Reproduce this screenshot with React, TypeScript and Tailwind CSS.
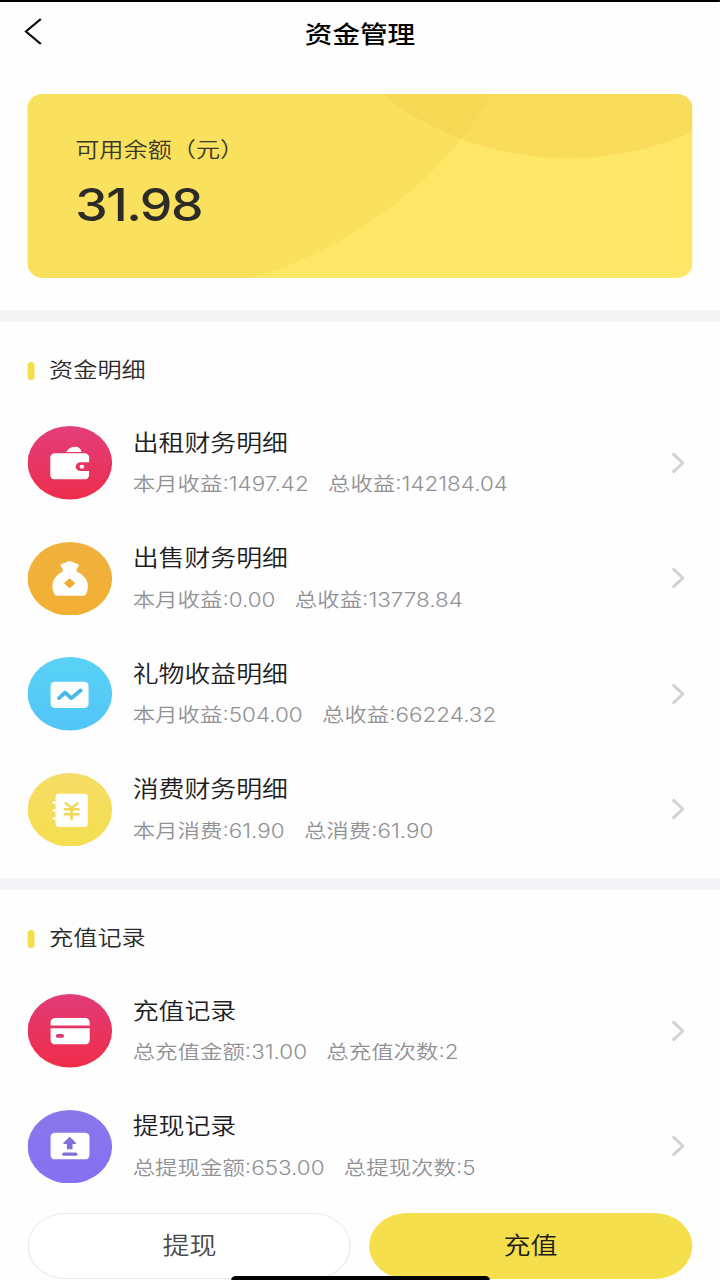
import type { ReactNode } from "react";

type Row = { title: string; parts: [string, string]; icon: ReactNode };

function Disc({ id, from, to, children }: { id: string; from: string; to: string; children: ReactNode }) {
  return (
    <svg className="h-[73.5px] w-[73.5px] shrink-0" viewBox="0 0 73.5 73.5" fill="none">
      <defs>
        <linearGradient id={id} x1="0" y1="0" x2="0" y2="1">
          <stop offset="0" stopColor={from} />
          <stop offset="1" stopColor={to} />
        </linearGradient>
      </defs>
      <circle cx="36.75" cy="36.75" r="36.75" fill={`url(#${id})`} />
      {children}
    </svg>
  );
}

const WalletIcon = (
  <Disc id="wallet" from="#e23e7c" to="#ee2d4c">
    <path d="M33.6 26c1.500-3.400 4.700-5.300 8-5.300 2.800 0 4.800 2 5.300 5.300z" fill="#fff" />
    <path
      d="M23.700 27.300h25.800a4 4 0 0 1 4 4v5h-7.300a4.400 4.400 0 0 0 0 8.800h7.300v4.200a4 4 0 0 1-4 4H23.700a4 4 0 0 1-4-4v-18a4 4 0 0 1 4-4z"
      fill="#fff"
    />
    <circle cx="47.200" cy="40.700" r="2" fill="#fff" />
  </Disc>
);

const BagIcon = (
  <Disc id="bag" from="#f0b13e" to="#f2b033">
    <path
      d="M30.500 21.500c1.500-.3 2-.5 3-1.300 1.400-1.200 4.600-1.200 6 0 1 .8 1.500 1 3 1.300 2 .3 2.500 2 1.500 3.300-1.400 1.600-1.800 3.200-1.100 5 5.800 2.900 9.500 8.200 9.500 14 0 3.200-.5 6.400-2 8.700-.6.900-1.300 1.300-2.200 1.300H25.800c-.9 0-1.600-.4-2.200-1.300-1.500-2.300-2-5.500-2-8.700 0-5.800 3.500-11.100 8.700-14 .7-1.800.3-3.400-1.100-5-1-1.300-.7-3 1.300-3.300z"
      fill="#fff"
    />
    <path d="M36.500 37.200l4 4-4 4-4-4z" fill="#efad38" stroke="#efad38" strokeWidth="1.500" strokeLinejoin="round" />
  </Disc>
);

const TrendIcon = (
  <Disc id="trend" from="#59d2f4" to="#52c5f8">
    <rect x="20" y="24.700" width="33" height="26.300" rx="4" fill="#fff" />
    <path d="M27.400 41.100l5.200-5.600 5.400 5.700 8.100-7.800" stroke="#4bb9e4" strokeWidth="3.600" strokeLinecap="round" strokeLinejoin="round" />
  </Disc>
);

const LedgerIcon = (
  <Disc id="ledger" from="#f5dc65" to="#f5df50">
    <rect x="24.300" y="20.700" width="28" height="33.300" rx="3" fill="#fff" />
    <path d="M22.500 29.700h3M22.500 37.500h3M22.500 45.300h3" stroke="#fff" strokeWidth="2.200" strokeLinecap="round" />
    <path d="M33.300 30.300l5 4.700 5-4.700M32.300 36.200h12M32.300 41.300h12M38.300 35.300v11" stroke="#f0d95a" strokeWidth="2.400" strokeLinecap="round" />
  </Disc>
);

const CardIcon = (
  <Disc id="card" from="#e03b78" to="#f02d49">
    <path d="M24 24h26a4 4 0 0 1 4 4v3.600H20V28a4 4 0 0 1 4-4zM20 34.200h34v12.100a4 4 0 0 1-4 4H24a4 4 0 0 1-4-4z" fill="#fff" />
    <rect x="24.500" y="40" width="7.200" height="3.800" rx="1.900" fill="#d83a67" />
  </Disc>
);

const UploadIcon = (
  <Disc id="upload" from="#8a77ea" to="#8570f3">
    <rect x="20" y="22.700" width="33.800" height="26.600" rx="4" fill="#fff" />
    <path d="M36.600 27.800l4.900 5.400h-3.100v5.400h-3.600v-5.400h-3.100z" fill="#8170d8" stroke="#8170d8" strokeWidth="1.400" strokeLinejoin="round" />
    <rect x="30" y="42.600" width="13.400" height="3.200" rx="1.600" fill="#8170d8" />
  </Disc>
);

const details: Row[] = [
  { title: "出租财务明细", parts: ["本月收益:1497.42", "总收益:142184.04"], icon: WalletIcon },
  { title: "出售财务明细", parts: ["本月收益:0.00", "总收益:13778.84"], icon: BagIcon },
  { title: "礼物收益明细", parts: ["本月收益:504.00", "总收益:66224.32"], icon: TrendIcon },
  { title: "消费财务明细", parts: ["本月消费:61.90", "总消费:61.90"], icon: LedgerIcon },
];

const records: Row[] = [
  { title: "充值记录", parts: ["总充值金额:31.00", "总充值次数:2"], icon: CardIcon },
  { title: "提现记录", parts: ["总提现金额:653.00", "总提现次数:5"], icon: UploadIcon },
];

function RecordRow({ title, parts, icon }: Row) {
  return (
    <li className="flex h-[115.5px] items-center pr-[7px]">
      {icon}
      <div className="ml-[17.5px] flex grow flex-col gap-[11.500px] pt-[1px] whitespace-nowrap">
        <div className="text-[22.5px] leading-[30px] font-[350] text-[#1d1d1f]">{title}</div>
        <div className="flex gap-[16.800px] text-[19.5px] leading-[30px] font-[350] text-[#929196]">
          <span>{parts[0]}</span>
          <span>{parts[1]}</span>
        </div>
      </div>
      <svg className="h-[22px] w-[11px] shrink-0" viewBox="0 0 11 22" fill="none">
        <path d="M1 1.500l8.800 9.500L1 20.500" stroke="#d2d2d5" strokeWidth="2.700" />
      </svg>
    </li>
  );
}

function Section({ title, rows }: { title: string; rows: Row[] }) {
  return (
    <section className="px-[24.4px] pt-[32px]">
      <h2 className="flex h-[32px] items-center gap-[12.300px] text-[21px] leading-[32px] font-[350] text-[#2a2a2c]">
        <span className="mt-[2px] h-[18px] w-[6px] rounded-[3px] bg-[#f5df46]" />
        {title}
      </h2>
      <ul className="mt-[19px]">
        {rows.map((row) => (
          <RecordRow key={row.title} {...row} />
        ))}
      </ul>
    </section>
  );
}

export default function App() {
  return (
    <div className="h-[1280px] w-[720px] overflow-hidden bg-white">
      <div className="relative flex h-[1280px] w-[626.1px] origin-top-left scale-x-[1.15] flex-col bg-[#fefefe] font-['Inter','Noto_Sans_CJK_SC',sans-serif]">
        <div className="h-[2px] shrink-0 bg-black" />
        <header className="grid h-[91.500px] shrink-0 grid-cols-[1fr_auto_1fr] items-start px-[21px]">
          <svg className="mt-[16px] h-[27px] w-[16px]" viewBox="0 0 16 27" fill="none">
            <path d="M14.500 1L1.500 13.500l13 12.500" stroke="#111" strokeWidth="2" />
          </svg>
          <h1 className="mt-[17px] text-[24px] leading-[32px] font-medium text-black">资金管理</h1>
        </header>

        <div className="relative mx-[24.400px] h-[184.500px] shrink-0 overflow-hidden rounded-[14px] bg-[#fee766]">
          <svg className="absolute inset-0 h-full w-full" viewBox="0 0 577.300 184.500" preserveAspectRatio="none">
            <circle cx="70" cy="-167" r="373" fill="#fae15d" />
            <circle cx="470" cy="-173" r="237" fill="#f4cf4c" fillOpacity="0.45" />
          </svg>
          <div className="relative px-[41px] pt-[40px]">
            <div className="text-[21px] leading-[32px] font-[350] text-[#3a3628]">可用余额（元）</div>
            <div className="mt-[14px] text-[45px] leading-[50px] font-[550] tracking-[-1.300px] text-[#2c2b26]">31.98</div>
          </div>
        </div>

        <div className="mt-[32px] h-[12px] shrink-0 bg-[#f5f5f6]" />
        <Section title="资金明细" rows={details} />
        <div className="mt-[11px] h-[12px] shrink-0 bg-[#f4f3f6]" />
        <Section title="充值记录" rows={records} />

        <footer className="mt-[9px] grid shrink-0 grid-cols-2 gap-[15.600px] px-[24.400px] text-[23.500px] font-[350]">
          <button className="h-[66px] rounded-full border border-[#e9e7ec] bg-white text-[#4a4a4d]">提现</button>
          <button className="h-[66px] rounded-full bg-[#f6df4c] text-[#1d1b12]">充值</button>
        </footer>
        <div className="absolute bottom-0 left-[201px] h-[4px] w-[224.500px] rounded-t-[4px] bg-black" />
      </div>
    </div>
  );
}
